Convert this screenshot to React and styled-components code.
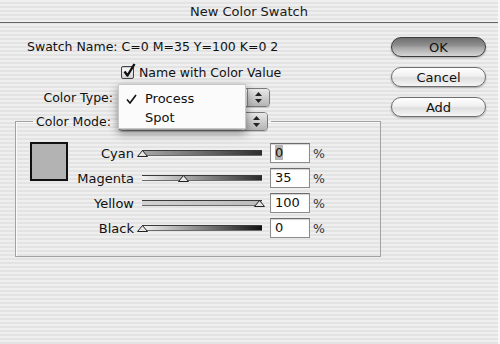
import React from 'react'
import styled, { createGlobalStyle } from 'styled-components'

const GlobalStyle = createGlobalStyle`
  html, body {
    margin: 0;
    padding: 0;
  }
  body {
    font-family: "DejaVu Sans", "Liberation Sans", sans-serif;
    font-size: 12.5px;
    color: #111;
  }
`

const Window = styled.div`
  width: 500px;
  height: 344px;
  box-sizing: border-box;
  background: repeating-linear-gradient(to bottom, #efefef 0 2px, #e3e3e3 2px 4px);
  border-right: 2px solid #f7f7f7;
  display: flex;
  flex-direction: column;
  overflow: hidden;
`

const TitleBar = styled.div`
  height: 22px;
  border-bottom: 1px solid #666;
  display: flex;
  align-items: center;
  justify-content: center;
  font-size: 13px;
  color: #1a1a1a;
`

const Body = styled.div`
  display: flex;
  justify-content: space-between;
`

const Main = styled.div`
  width: 385px;
  padding-top: 13px;
  display: flex;
  flex-direction: column;
`

const Row = styled.div`
  display: flex;
  align-items: center;
  height: 20px;
  margin-top: ${p => p.$gap || 0}px;
  padding-left: ${p => p.$indent || 0}px;
`

const FieldLabel = styled.span`
  width: 113px;
  padding-right: 7px;
  text-align: right;
`

const CheckBox = styled.span`
  position: relative;
  width: 11px;
  height: 11px;
  margin-right: 5px;
  border: 1px solid #444;
  border-radius: 2px;
  background: linear-gradient(#ffffff, #d4d4d4);
  box-shadow: inset 0 1px 1px rgba(0, 0, 0, 0.2);
`

const CheckMark = styled.svg`
  position: absolute;
  left: 1px;
  top: -4px;
`

const PopupWrap = styled.div`
  position: relative;
`

const Popup = styled.div`
  width: 150px;
  height: 19px;
  box-sizing: border-box;
  display: flex;
  border: 1px solid #7a7a7a;
  border-radius: 4px;
  background: linear-gradient(#ffffff, #ececec);
  box-shadow: 0 1px 1px rgba(0, 0, 0, 0.15);
  overflow: hidden;
`

const PopupValue = styled.span`
  flex: 1;
  padding-left: 8px;
  line-height: 17px;
  color: ${p => (p.$disabled ? '#bdbdbd' : '#111')};
`

const PopupArrows = styled.span`
  width: 21px;
  border-left: 1px solid #8a8a8a;
  background: linear-gradient(#e8e8e8, #b4b4b4);
  display: flex;
  align-items: center;
  justify-content: center;
`

const Menu = styled.div`
  position: absolute;
  top: -4px;
  left: -2px;
  z-index: 10;
  width: 128px;
  box-sizing: border-box;
  padding: 4px 0 1px;
  background: #fbfbfb;
  border: 1px solid #c8c8c8;
  box-shadow: 0 4px 9px rgba(0, 0, 0, 0.45);
`

const MenuItem = styled.div`
  position: relative;
  height: 19px;
  line-height: 19px;
  padding-left: 26px;
  font-size: 13px;
`

const MenuCheck = styled.svg`
  position: absolute;
  left: 7px;
  top: 5px;
`

const Group = styled.fieldset`
  margin: 4px 0 0 15px;
  width: 366px;
  box-sizing: border-box;
  padding: 11px 0 18px 14px;
  border: 1px solid #a2a2a2;
  box-shadow: inset 1px 1px 0 #fafafa;
`

const Legend = styled.legend`
  display: flex;
  align-items: center;
  margin-left: 3px;
  padding: 0 3px;
  height: 20px;
`

const LegendLabel = styled.span`
  margin-right: 7px;
`

const GroupContent = styled.div`
  display: flex;
  align-items: flex-start;
`

const Preview = styled.div`
  width: 38px;
  height: 39px;
  box-sizing: border-box;
  border: 2px solid #111;
  background: #b3b3b3;
  box-shadow: 0 0 0 1px #e8e8e8;
`

const Sliders = styled.div`
  display: grid;
  grid-template-columns: 66px 128px 48px 16px;
  grid-auto-rows: 20px;
  row-gap: 5px;
  align-items: center;
  margin-top: 1px;
`

const SliderLabel = styled.span`
  text-align: right;
  font-size: 13px;
`

const SliderCell = styled.div`
  position: relative;
  margin-left: 8px;
  height: 20px;
  display: flex;
  align-items: center;
`

const Track = styled.div`
  width: 100%;
  height: 4px;
  border-top: 1px solid #3a3a3a;
  border-bottom: 1px solid #6a6a6a;
  background: ${p => p.$fill};
`

const Thumb = styled.svg`
  position: absolute;
  top: 7px;
`

const NumberBox = styled.div`
  justify-self: end;
  width: 40px;
  height: 20px;
  box-sizing: border-box;
  padding-left: 4px;
  border: 1px solid #8c8c8c;
  border-top-color: #6c6c6c;
  background: #fff;
  box-shadow: inset 0 1px 1px rgba(0, 0, 0, 0.18);
  line-height: 18px;
  font-size: 13px;
`

const Selected = styled.span`
  background: #b5b5b5;
`

const Percent = styled.span`
  padding-left: 3px;
  color: #333;
`

const Buttons = styled.div`
  display: flex;
  flex-direction: column;
  gap: 10px;
  padding: 14px 12px 0 0;
`

const Button = styled.button`
  width: 95px;
  height: 20px;
  padding: 0;
  border: 1px solid ${p => (p.$primary ? '#3c3c3c' : '#6e6e6e')};
  border-radius: 10px;
  font-family: inherit;
  font-size: 13px;
  color: #111;
  background: ${p =>
    p.$primary
      ? 'linear-gradient(#6f6f6f, #8e8e8e 40%, #a8a8a8 55%, #d6d6d6)'
      : 'linear-gradient(#ffffff, #f0f0f0 45%, #dedede 55%, #f6f6f6)'};
  box-shadow: 0 1px 2px rgba(0, 0, 0, 0.3);
`

const Arrows = () => (
  <svg width="7" height="11" viewBox="0 0 7 11">
    <polygon points="3.5,0 7,4 0,4" fill="#222" />
    <polygon points="0,7 7,7 3.5,11" fill="#222" />
  </svg>
)

const channels = [
  { name: 'Cyan', value: 0, fill: 'linear-gradient(to right, #a8a8a8, #2e2e2e)', selected: true },
  { name: 'Magenta', value: 35, fill: 'linear-gradient(to right, #f2f2f2, #2a2a2a)' },
  { name: 'Yellow', value: 100, fill: 'linear-gradient(to right, #d2d2d2, #bcbcbc)' },
  { name: 'Black', value: 0, fill: 'linear-gradient(to right, #f4f4f4, #111111)' },
]

export default function App() {
  return (
    <>
      <GlobalStyle />
      <Window>
        <TitleBar>New Color Swatch</TitleBar>
        <Body>
          <Main>
            <Row $indent={27}>Swatch Name: C=0 M=35 Y=100 K=0 2</Row>
            <Row $gap={6} $indent={121}>
              <CheckBox>
                <CheckMark width="13" height="15" viewBox="0 0 13 15">
                  <path d="M1.5 8.5 L4.5 12.5 L11.5 1" fill="none" stroke="#111" strokeWidth="2.4" strokeLinejoin="round" />
                </CheckMark>
              </CheckBox>
              Name with Color Value
            </Row>
            <Row $gap={5}>
              <FieldLabel>Color Type:</FieldLabel>
              <PopupWrap>
                {/* current value sits under the open menu */}
                <Popup>
                  <PopupValue />
                  <PopupArrows><Arrows /></PopupArrows>
                </Popup>
                <Menu>
                  <MenuItem>
                    <MenuCheck width="11" height="10" viewBox="0 0 11 10">
                      <path d="M1 5.5 L4 9 L10 1" fill="none" stroke="#111" strokeWidth="1.6" />
                    </MenuCheck>
                    Process
                  </MenuItem>
                  <MenuItem>Spot</MenuItem>
                </Menu>
              </PopupWrap>
            </Row>
            <Group>
              <Legend>
                <LegendLabel>Color Mode:</LegendLabel>
                <Popup>
                  <PopupValue $disabled>CMYK</PopupValue>
                  <PopupArrows><Arrows /></PopupArrows>
                </Popup>
              </Legend>
              <GroupContent>
                <Preview />
                <Sliders>
                  {channels.map(c => (
                    <React.Fragment key={c.name}>
                      <SliderLabel>{c.name}</SliderLabel>
                      <SliderCell>
                        <Track $fill={c.fill} />
                        <Thumb
                          width="11"
                          height="7"
                          viewBox="0 0 11 7"
                          style={{ left: `${(c.value / 100) * 117 - 5}px` }}
                        >
                          <polygon points="0.5,6.5 5.5,0.5 10.5,6.5" fill="#e6e6e6" stroke="#222" />
                        </Thumb>
                      </SliderCell>
                      <NumberBox>{c.selected ? <Selected>{c.value}</Selected> : c.value}</NumberBox>
                      <Percent>%</Percent>
                    </React.Fragment>
                  ))}
                </Sliders>
              </GroupContent>
            </Group>
          </Main>
          <Buttons>
            <Button $primary>OK</Button>
            <Button>Cancel</Button>
            <Button>Add</Button>
          </Buttons>
        </Body>
      </Window>
    </>
  )
}
